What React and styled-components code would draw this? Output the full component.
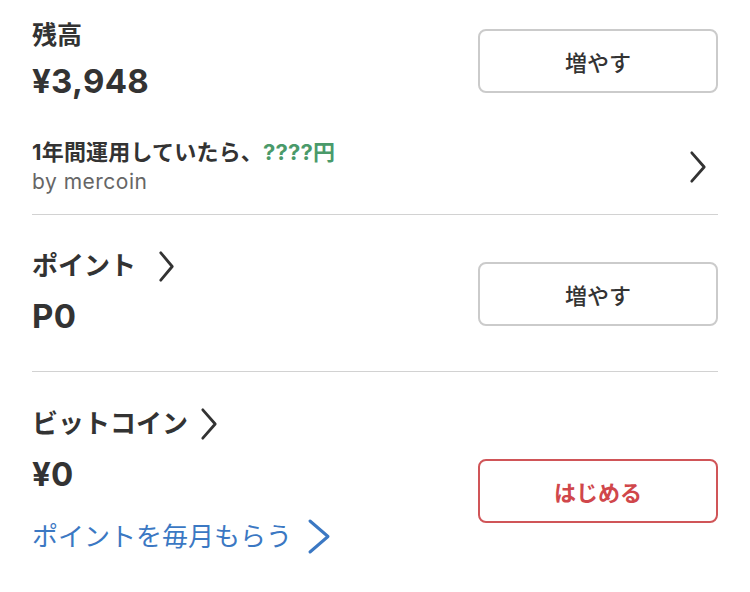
import React from 'react'
import styled, { createGlobalStyle } from 'styled-components'

const GlobalStyle = createGlobalStyle`
  body {
    margin: 0;
    background: #fff;
    font-family: Inter, 'Noto Sans CJK JP', sans-serif;
    color: #333;
  }
`

const Page = styled.main`
  padding: 0 32px;
  width: 750px;
  box-sizing: border-box;
`

const Section = styled.section`
  padding: ${(p) => p.$top}px 0 ${(p) => p.$bottom}px;
  border-bottom: 1px solid #d2d2d2;
`

const Row = styled.div`
  display: flex;
  justify-content: space-between;
  align-items: center;
`

const Column = styled.div`
  display: flex;
  flex-direction: column;
  gap: ${(p) => p.$gap || 8}px;
`

const Label = styled.div`
  display: flex;
  align-items: center;
  font-size: ${(p) => p.$size || 26}px;
  line-height: 34px;
  font-weight: 600;
  color: #333;
  svg {
    margin-left: ${(p) => p.$chevronGap || 12}px;
  }
`

const Amount = styled.div`
  font-size: 33px;
  line-height: 44px;
  font-weight: 700;
  color: #333;
  letter-spacing: 0.3px;
`

const ActionButton = styled.button`
  width: 240px;
  height: 64px;
  margin-top: ${(p) => p.$offset || 0}px;
  background: #fff;
  border: 2px solid ${(p) => (p.$accent ? '#d05558' : '#cbcbcb')};
  border-radius: 8px;
  font-family: inherit;
  font-size: 22px;
  font-weight: ${(p) => (p.$accent ? 700 : 500)};
  color: ${(p) => (p.$accent ? '#d0474b' : '#333')};
  cursor: pointer;
`

const Promo = styled.a`
  display: flex;
  justify-content: space-between;
  align-items: center;
  margin-top: 35px;
  padding-right: 11px;
  color: inherit;
  text-decoration: none;
`

const PromoTitle = styled.div`
  font-size: 22px;
  line-height: 28px;
  font-weight: 700;
  letter-spacing: 0.2px;
  color: #333;
  span {
    color: #4a9a6a;
  }
`

const PromoSub = styled.div`
  font-size: 21px;
  line-height: 26px;
  letter-spacing: 0.5px;
  color: #666;
  margin-top: 3px;
`

const BlueLink = styled.a`
  display: flex;
  align-items: center;
  gap: 15px;
  margin-top: 11px;
  font-size: 26px;
  line-height: 34px;
  color: #3b78c3;
  text-decoration: none;
`

function Chevron({ color = '#333', width = 18, height = 34, stroke = 2.8 }) {
  return (
    <svg width={width} height={height} viewBox={`0 0 ${width} ${height}`} fill="none">
      <polyline
        points={`${stroke},${stroke} ${width - stroke},${height / 2} ${stroke},${height - stroke}`}
        stroke={color}
        strokeWidth={stroke}
        strokeLinecap="round"
        strokeLinejoin="round"
      />
    </svg>
  )
}

export default function App() {
  return (
    <>
      <GlobalStyle />
      <Page>
        <Section $top={18} $bottom={19}>
          <Row>
            <Column $gap={7}>
              <Label $size={25}>残高</Label>
              <Amount>¥3,948</Amount>
            </Column>
            <ActionButton>増やす</ActionButton>
          </Row>
          <Promo href="#">
            <div>
              <PromoTitle>
                1年間運用していたら、<span>????円</span>
              </PromoTitle>
              <PromoSub>by mercoin</PromoSub>
            </div>
            <Chevron />
          </Promo>
        </Section>

        <Section $top={34} $bottom={33}>
          <Row>
            <Column $gap={11}>
              <Label $chevronGap={22}>
                ポイント
                <Chevron width={17} height={33} />
              </Label>
              <Amount>P0</Amount>
            </Column>
            <ActionButton>増やす</ActionButton>
          </Row>
        </Section>

        <Section $top={35} $bottom={38}>
          <Row>
            <Column $gap={11}>
              <Label>
                ビットコイン
                <Chevron width={18} height={34} />
              </Label>
              <Amount>¥0</Amount>
              <BlueLink href="#">
                ポイントを毎月もらう
                <Chevron color="#3b78c3" width={24} height={37} stroke={3} />
              </BlueLink>
            </Column>
            <ActionButton $accent $offset={19}>
              はじめる
            </ActionButton>
          </Row>
        </Section>
      </Page>
    </>
  )
}
